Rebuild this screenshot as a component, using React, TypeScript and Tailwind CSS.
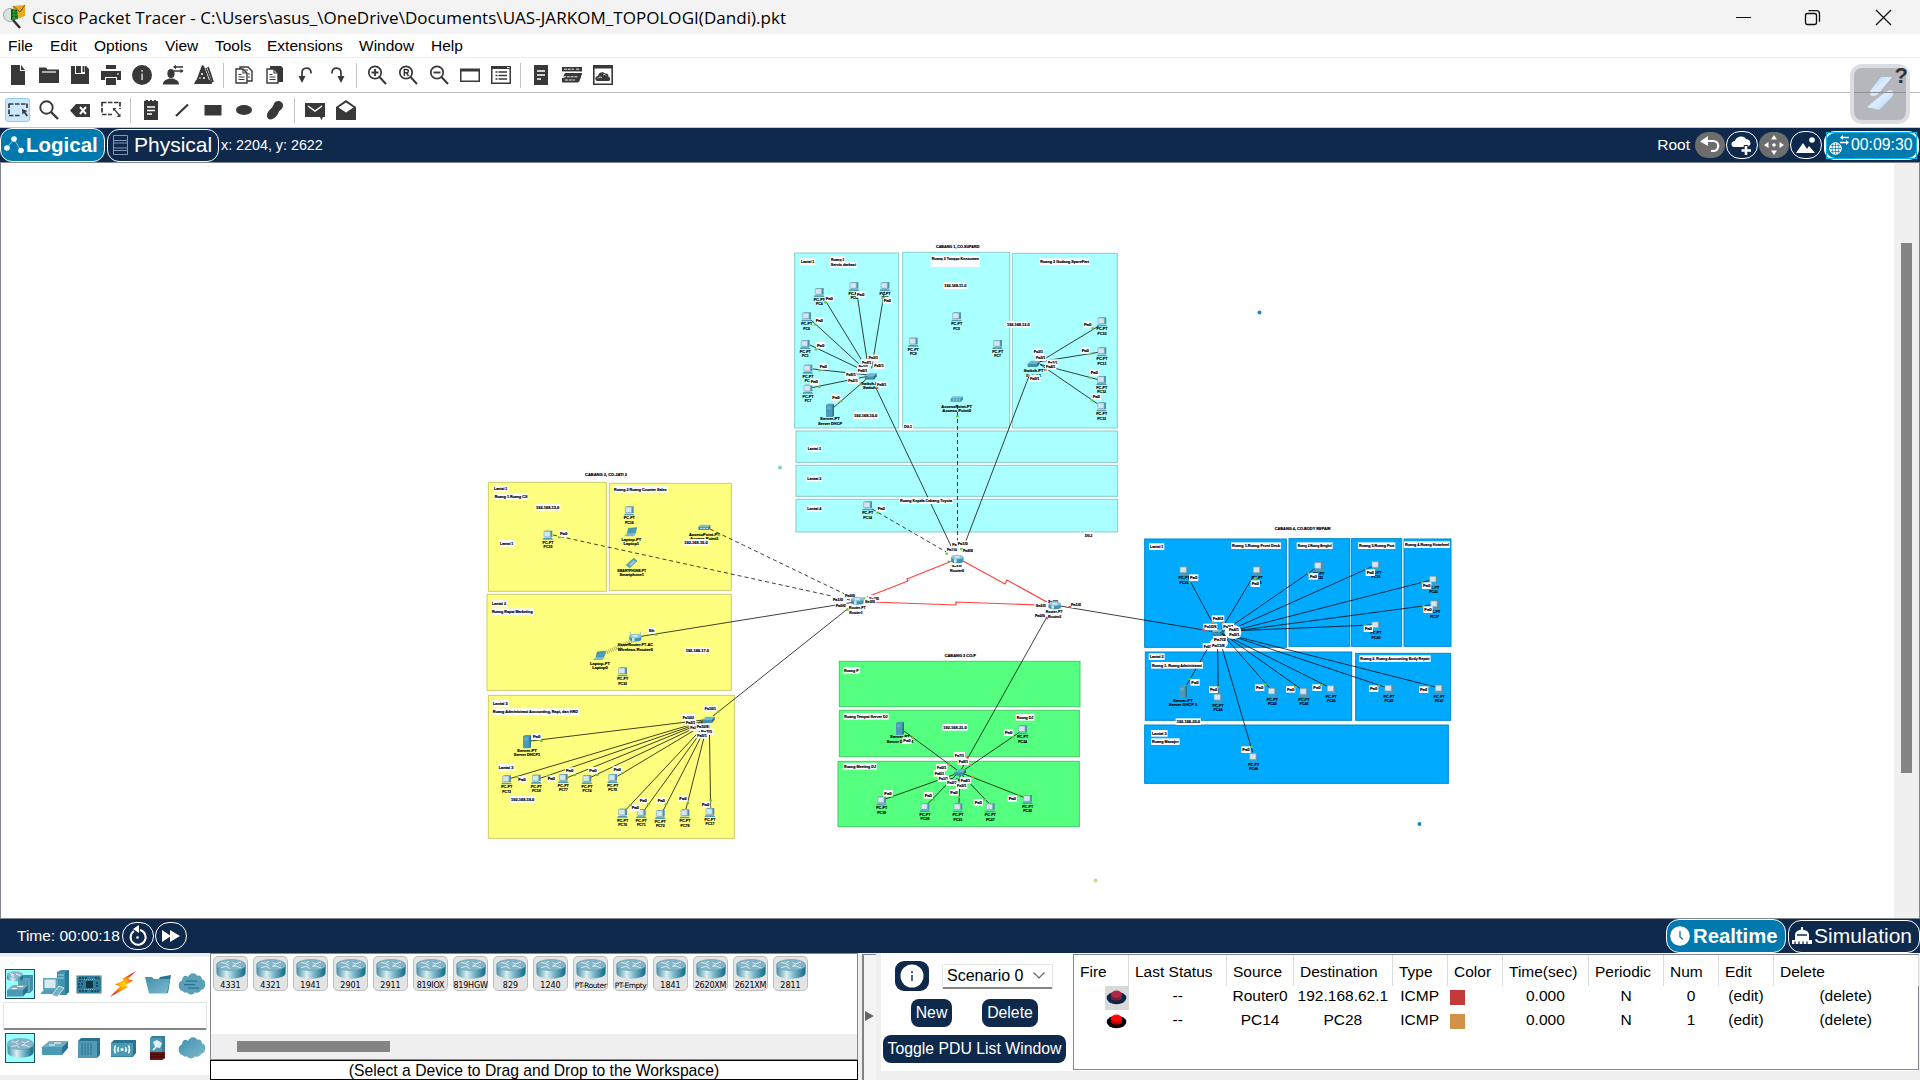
import React from "react";

const INK = "#38383a";

/* ---------- toolbar glyphs, drawn on a 20 x 20 grid ---------- */

const glyphs: Record<string, React.ReactNode> = {
  file: (
    <>
      <path d="M3 0h9v6h5v14H3z" />
      <path d="M13 0l4 5h-4z" />
    </>
  ),
  folder: (
    <>
      <path d="M0 2.500h7l1.500 2H20V18H0z" />
      <path d="M3 7h14" stroke="#fff" strokeWidth="1.200" />
    </>
  ),
  save: (
    <>
      <path d="M1 1h15l3 3v15H1z" />
      <path d="M5 1h10v8H5z" fill="#fff" />
      <path d="M6 1h5v7H6zM12.500 1h2v6h-2z" />
    </>
  ),
  print: (
    <>
      <path d="M5 0h10v4H5zM0 6h20v9h-4v-3H4v3H0z" />
      <path d="M5 13h10v7H5z" />
      <path d="M4 5h12M16 9h2" stroke="#fff" />
    </>
  ),
  info: (
    <>
      <circle cx="10" cy="10" r="10" />
      <path d="M9.200 5h1.800v1.800H9.200zM9.200 8.500h1.800v6.500H9.200z" fill="#bbb" />
    </>
  ),
  user: (
    <>
      <ellipse cx="8" cy="8.500" rx="3.600" ry="4.500" />
      <path d="M0 19.500c0-4 3-4.500 6-6h4c3 1.500 6 2 6 6z" />
      <path d="M11 2h9M11 6h9" stroke={INK} strokeWidth="1.400" />
      <path d="M10 2l3-2.200v4.400zM20.500 6l-3-2.200v4.400z" />
    </>
  ),
  wizard: (
    <>
      <path d="M8 0l2 1 5 14H2.500z" />
      <path d="M0 19l2-4h14l2 4z" />
      <path d="M12 3l6 15" stroke={INK} strokeWidth="1.600" />
      <path d="M13 2l6 16" stroke="#fff" strokeWidth="1" />
      <path d="M14 2l5 15" stroke={INK} strokeWidth="1.800" />
      <circle cx="8" cy="9" r="1" fill="#fff" />
      <circle cx="10" cy="13" r="1" fill="#fff" />
      <circle cx="6" cy="13" r="0.800" fill="#fff" />
    </>
  ),
  copy: (
    <g fill="#fff" stroke={INK} strokeWidth="1.400">
      <path d="M6 2h8l4 4v10H6z" />
      <path d="M2 4h7l4 4v10H2z" />
      <path d="M9 4v4h4M4.500 9.500h3M4.500 12h6M4.500 14.500h6M11 5h3M14 9h2M14 12h2" fill="none" strokeWidth="1.100" />
    </g>
  ),
  paste: (
    <>
      <path d="M5 1h11l2 2v14H5z" />
      <path d="M2 4h7l4 4v10H2z" fill="#fff" stroke={INK} strokeWidth="1.400" />
      <path d="M9 4v4h4M4.500 9.500h3M4.500 12h6M4.500 14.500h6" fill="none" stroke={INK} strokeWidth="1.100" />
    </>
  ),
  undo: (
    <>
      <path d="M6 12V8c0-6.500 9-6.500 9-.5v1" fill="none" stroke={INK} strokeWidth="1.700" />
      <path d="M2.500 11h7L6 18z" />
    </>
  ),
  redo: (
    <>
      <path d="M14 12V8c0-6.500-9-6.500-9-.5v1" fill="none" stroke={INK} strokeWidth="1.700" />
      <path d="M10.500 11h7L14 18z" />
    </>
  ),
  zoomin: (
    <>
      <circle cx="8" cy="7.500" r="6.200" fill="none" stroke={INK} strokeWidth="1.700" />
      <path d="M12.500 12l6.500 7" stroke={INK} strokeWidth="2" />
      <path d="M4.500 7.500h7M8 4v7" stroke={INK} strokeWidth="1.900" />
    </>
  ),
  zoomreset: (
    <>
      <circle cx="8" cy="7.500" r="6.200" fill="none" stroke={INK} strokeWidth="1.700" />
      <path d="M12.500 12l6.500 7" stroke={INK} strokeWidth="2" />
      <path d="M6.300 11V4.500h2.200c2.400 0 2.400 3.300 0 3.300H6.500M8.500 7.800l2 3.200" fill="none" stroke={INK} strokeWidth="1.500" />
    </>
  ),
  zoomout: (
    <>
      <circle cx="8" cy="7.500" r="6.200" fill="none" stroke={INK} strokeWidth="1.700" />
      <path d="M12.500 12l6.500 7" stroke={INK} strokeWidth="2" />
      <path d="M4.500 7.500h7" stroke={INK} strokeWidth="1.900" />
    </>
  ),
  window: (
    <>
      <path d="M0 3.500h20V17H0z" />
      <path d="M1.500 6.500h17v9h-17z" fill="#fff" />
    </>
  ),
  list: (
    <>
      <path d="M0 1h20v18H0z" />
      <path d="M1.500 4h17v13.500h-17z" fill="#fff" />
      <path d="M4.500 7h2M4.500 10.500h2M4.500 14h2M7.500 7H16M7.500 10.500H16M7.500 14H16" stroke={INK} strokeWidth="1.400" />
      <path d="M16 2.500h2.500" stroke="#fff" />
    </>
  ),
  doc: (
    <>
      <path d="M3 0h14v20H3z" />
      <path d="M6 6h8M6 10h8M6 14h4" stroke="#fff" strokeWidth="1.400" />
    </>
  ),
  devices: (
    <>
      <path d="M0 2h20v4.500H0zM3 8h17v2L17 12H1z" />
      <path d="M1 13l2-1h13l3-4v4l-2 5H1z" />
      <path d="M0 13h16v4.500H0z" />
      <path d="M2 4.200h10M14 4.200h4M0 7.300h18M3 15h10M1 11.800h15" stroke="#fff" strokeWidth="0.900" strokeDasharray="3 0.800" />
    </>
  ),
  cloudwin: (
    <>
      <path d="M0 0h20v20H0z" />
      <path d="M1.600 3.500h16.800v15H1.600z" fill="#fff" />
      <path d="M4.500 16c-3-.5-3-4.500.5-5 .5-4 5-5 7-2.500 3-.5 4 2 3.500 3.500 2.500.5 2 4 0 4z" />
      <path d="M5 13.500c1-2 3-2 4-.5M10 10c1-.8 2-.8 3 .5" fill="none" stroke="#fff" strokeWidth="0.800" />
    </>
  ),
  select: (
    <>
      <path d="M1 4h18M1 15.500h12M1 3.500v12M19 3.500v6" fill="none" stroke={INK} strokeWidth="1.700" strokeDasharray="4.500 1.500" />
      <path d="M14 9l5.500 2-2 1 2.500 3.500-1.500 1L16 13l-1.500 1.500z" />
    </>
  ),
  inspect: (
    <>
      <circle cx="7.500" cy="7.500" r="6.200" fill="none" stroke={INK} strokeWidth="1.900" />
      <path d="M12 12l7 7" stroke={INK} strokeWidth="2.400" />
    </>
  ),
  erase: (
    <>
      <path d="M0 10.500L6 4h14v13H6z" />
      <path d="M10 7l6 7M16 7l-6 7" stroke="#fff" strokeWidth="2" />
    </>
  ),
  resize: (
    <>
      <path d="M1 2.500h18M1 14.500h10M1 2v12M19 2v7" fill="none" stroke={INK} strokeWidth="1.700" strokeDasharray="4.500 1.500" />
      <path d="M13 9l5 6" stroke={INK} strokeWidth="1.200" />
      <path d="M12 8h3.500L12 11zM19.500 17h-4l4-3.500z" />
    </>
  ),
  note: (
    <>
      <path d="M3 1h1.500V0H7v1h2V0h2v1h2V0h2v1h2v19H3z" />
      <path d="M6 7h8M6 10.500h8M6 14h5" stroke="#fff" strokeWidth="1.300" />
    </>
  ),
  line: <path d="M4 16L16 4.500" stroke={INK} strokeWidth="2.200" />,
  rect: <path d="M1.500 5h17v10.500h-17z" />,
  ellipse: <ellipse cx="10" cy="10" rx="8" ry="5" />,
  free: <path d="M9 3.500c2-4 9-3 9 2 0 4-3.500 4-4.500 7S9 19.500 5.500 19.500C2 19.500 1 15 3 12c2-3 5-4.500 6-8.500z" />,
  mail: (
    <>
      <path d="M0 3h20v14h-2l-1.500 3-1.500-3H0z" />
      <path d="M3 6l7 5 7-5" fill="none" stroke="#fff" strokeWidth="1.500" />
    </>
  ),
  mailopen: (
    <>
      <path d="M0 7l10-7 10 7v13H0z" />
      <path d="M2.500 7.500L10 2.500l7.500 5-7.500 5z" fill="#fff" />
    </>
  ),
};

function Tool({ name, active }: { name: string; active?: boolean }) {
  return (
    <div className="flex h-full w-[31px] shrink-0 items-center justify-center">
      <div
        className={
          active
            ? "flex h-6 w-[25px] items-center justify-center rounded-[3px] border border-[#90c8f6] bg-[#cce8ff]"
            : "flex h-6 w-[25px] items-center justify-center"
        }
      >
        <svg width="20" height="20" viewBox="0 0 20 20" fill={INK} className="shrink-0 overflow-visible">
          {glyphs[name]}
        </svg>
      </div>
    </div>
  );
}

function ToolRow({ groups, active }: { groups: string[][]; active?: string }) {
  return (
    <div className="flex h-full items-center pl-[2px]">
      {groups.map((g, i) => (
        <React.Fragment key={i}>
          {i > 0 && (
            <div className="flex w-[9px] shrink-0 justify-center">
              <div className="h-[25px] w-px bg-[#c4c4c4]" />
            </div>
          )}
          {g.map((n) => (
            <Tool key={n} name={n} active={n === active} />
          ))}
        </React.Fragment>
      ))}
    </div>
  );
}

/* ---------- topology canvas ---------- */

type Device = [kind: string, x: number, y: number, a?: string, b?: string];
type Label = [x: number, y: number, text: string, w?: number];
type Link = [x1: number, y1: number, x2: number, y2: number];
type Zone = [x1: number, y1: number, x2: number, y2: number];

interface Site {
  ox: number;
  oy: number;
  fill: string;
  stroke: string;
  zones: Zone[];
  links: Link[];
  dots: [number, number, string?][];
  devices: Device[];
  labels: Label[];
}

const G = "#6cc644";
const O = "#f08030";
const R = "#f04848";

const sites: Site[] = [
  {
    ox: 780,
    oy: 235,
    fill: "#aaffff",
    stroke: "#88cccc",
    zones: [
      [44, 54, 356, 579],
      [368, 52, 689, 579],
      [697, 55, 1012, 579],
      [48, 588, 1013, 682],
      [48, 691, 1013, 784],
      [48, 793, 1013, 891],
    ],
    links: [
      [132, 190, 260, 400],
      [230, 170, 265, 400],
      [313, 170, 275, 400],
      [92, 254, 262, 410],
      [90, 330, 262, 412],
      [98, 402, 265, 420],
      [96, 458, 262, 424],
      [160, 518, 262, 430],
      [780, 380, 958, 272],
      [780, 380, 955, 352],
      [780, 388, 955, 434],
      [780, 388, 955, 508],
    ],
    dots: [
      [136, 202], [105, 269], [108, 344], [119, 406], [118, 456], [183, 499], [242, 448, O], [290, 458, O],
      [532, 544], [938, 280], [932, 356], [930, 428], [936, 496], [796, 405, O], [746, 422, O], [293, 833],
      [310, 188],
    ],
    devices: [
      ["pc", 118, 172, "PC-PT", "PC4"],
      ["pc", 222, 154, "PC-PT", "PC6"],
      ["pc", 315, 154, "PC-PT", "PC8"],
      ["pc", 80, 245, "PC-PT", "PC0"],
      ["pc", 76, 328, "PC-PT", "PC1"],
      ["pc", 84, 402, "PC-PT", "PC2"],
      ["pc", 84, 462, "PC-PT", "PC7"],
      ["server", 150, 526, "Server-PT", "Server DHCP"],
      ["switch", 272, 424, "Switch-PT", "Switch0"],
      ["pc", 530, 245, "PC-PT", "PC5"],
      ["pc", 400, 321, "PC-PT", "PC8"],
      ["pc", 653, 328, "PC-PT", "PC7"],
      ["ap", 530, 492, "AccessPoint-PT", "Access Point0"],
      ["switch", 761, 386, "Switch-PT", "Switch1"],
      ["pc", 966, 260, "PC-PT", "PC10"],
      ["pc", 966, 350, "PC-PT", "PC11"],
      ["pc", 965, 436, "PC-PT", "PC12"],
      ["pc", 965, 515, "PC-PT", "PC13"],
      ["pc", 263, 812, "PC-PT", "PC14"],
    ],
    labels: [
      [533, 34, "CABANG 1, CO.SUPARD", 130],
      [83, 80, "Lantai 1", 40],
      [173, 74, "Ruang 1", 40],
      [190, 89, "Servis darkasi", 76],
      [526, 71, "Ruang 2 Tunggu Konsumen", 142],
      [526, 86, " ", 142],
      [854, 80, "Ruang 3 Gudang SparePart", 146],
      [526, 152, "192.168.11.0", 66],
      [715, 268, "192.168.12.0", 68],
      [257, 542, "192.168.10.0", 70],
      [384, 576, "DG.1", 24],
      [926, 901, "DG.2", 22],
      [103, 641, "Lantai 2", 40],
      [103, 730, "Lantai 3", 42],
      [103, 820, "Lantai 4", 42],
      [438, 797, "Ruang Kepala Cabang Toyota", 156],
      [148, 190, "Fa0"], [242, 178, "Fa0"], [322, 196, "Fa0"], [118, 256, "Fa0"], [122, 331, "Fa0"],
      [130, 394, "Fa0"], [103, 441, "Fa0"], [168, 488, "Fa0"],
      [280, 369, "Fa3/1", 28], [260, 382, "Fa4/1", 28], [250, 396, "Fa1/1", 28], [297, 392, "Fa5/1", 28],
      [248, 406, "Fa6/1", 28], [213, 418, "Fa8/1", 28], [219, 436, "Fa2/1", 28], [305, 448, "Fa9/1", 28],
      [775, 351, "Fa3/1", 28], [782, 368, "Fa2/1", 28], [818, 383, "Fa1/1", 28], [812, 395, "Fa4/1", 28], [764, 430, "Fa0/1", 28],
      [923, 268, "Fa0"], [916, 346, "Fa0"], [943, 414, "Fa0"], [949, 485, "Fa0"], [304, 820, "Fa0"],
    ],
  },
  {
    ox: 480,
    oy: 465,
    fill: "#ffff7f",
    stroke: "#cccc66",
    zones: [
      [25, 52, 379, 379],
      [388, 55, 754, 376],
      [21, 388, 754, 676],
      [25, 691, 763, 1120],
    ],
    links: [
      [152, 828, 670, 765],
      [92, 940, 670, 768],
      [180, 940, 672, 770],
      [262, 938, 672, 772],
      [330, 938, 675, 774],
      [412, 934, 676, 776],
      [438, 1034, 678, 778],
      [494, 1034, 680, 778],
      [550, 1036, 682, 778],
      [618, 1032, 682, 778],
      [692, 1030, 688, 778],
    ],
    dots: [
      [238, 217], [717, 209], [528, 509], [715, 740], [184, 828], [112, 936], [205, 932], [284, 930], [352, 930],
      [428, 924], [452, 1020], [505, 1018], [558, 1018], [624, 1014], [692, 1006],
    ],
    devices: [
      ["pc", 204, 210, "PC-PT", "PC15"],
      ["pc", 448, 137, "PC-PT", "PC16"],
      ["laptop", 454, 202, "Laptop-PT", "Laptop1"],
      ["phone", 455, 294, "SMARTPHONE-PT", "Smartphone1"],
      ["ap", 673, 187, "AccessPoint-PT", "Access Point1"],
      ["wrouter", 466, 518, "HomeRouter-PT-AC", "Wireless Router0"],
      ["laptop", 360, 573, "Laptop-PT", "Laptop0"],
      ["pc", 428, 620, "PC-PT", "PC32"],
      ["server", 141, 830, "Server-PT", "Server DHCP1"],
      ["switch", 686, 764],
      ["pc", 80, 944, "PC-PT", "PC73"],
      ["pc", 169, 942, "PC-PT", "PC18"],
      ["pc", 250, 940, "PC-PT", "PC77"],
      ["pc", 321, 943, "PC-PT", "PC74"],
      ["pc", 398, 940, "PC-PT", "PC75"],
      ["pc", 428, 1044, "PC-PT", "PC70"],
      ["pc", 484, 1045, "PC-PT", "PC71"],
      ["pc", 541, 1048, "PC-PT", "PC72"],
      ["pc", 615, 1046, "PC-PT", "PC78"],
      ["pc", 690, 1042, "PC-PT", "PC17"],
    ],
    labels: [
      [378, 28, "CABANG 2, CO.JATI 2", 126],
      [62, 71, "Lantai 1", 40],
      [93, 95, "Ruang 1 Ruang CS", 98],
      [203, 127, "192.168.13.0", 70],
      [481, 73, "Ruang 2 Ruang Counter Sales", 158],
      [80, 235, "Lantai 1", 40],
      [648, 232, "192.168.15.0", 70],
      [57, 415, "Lantai 2", 42],
      [97, 440, "Ruang Rapat Marketing", 122],
      [652, 557, "192.168.17.0", 70],
      [61, 715, "Lantai 3", 44],
      [166, 740, "Ruang Administrasi Accounting, Rapi, dan HRD", 256],
      [78, 907, "Lantai 3", 44],
      [128, 1003, "192.168.18.0", 70],
      [251, 206, "Fa0"], [515, 497, "Eth", 16], [691, 730, "Fa10/1", 34], [170, 815, "Fa0"], [126, 943, "Fa0"],
      [214, 940, "Fa0"], [269, 917, "Fa0"], [339, 916, "Fa0"], [412, 914, "Fa0"], [466, 1028, "Fa0"], [490, 1006, "Fa0"],
      [544, 1006, "Fa0"], [609, 1000, "Fa0"], [677, 1018, "Fa0"],
      [680, 800, "Fa7/1", 34], [625, 757, "Fa10/2", 34], [632, 772, "Fa2/1", 28], [645, 788, "Fa3/1", 28], [668, 785, "Fa10/8", 36], [666, 811, "Fa5/1", 28],
    ],
  },
  {
    ox: 730,
    oy: 535,
    fill: "#55ff7f",
    stroke: "#44cc66",
    zones: [
      [328, 379, 1050, 515],
      [328, 526, 1048, 665],
      [324, 679, 1048, 875],
    ],
    links: [
      [522, 588, 685, 708],
      [868, 592, 692, 712],
      [466, 792, 680, 716],
      [596, 804, 680, 718],
      [687, 804, 690, 718],
      [776, 804, 694, 718],
      [884, 788, 700, 716],
    ],
    dots: [
      [656, 688, O], [722, 690, O], [728, 726, O], [548, 608, O], [850, 606], [488, 786], [611, 794], [687, 786],
      [764, 794], [865, 780], [713, 667, R],
    ],
    devices: [
      ["server", 510, 580, "Server-PT", "Server DHCP2"],
      ["pc", 878, 584, "PC-PT", "PC24"],
      ["switch", 690, 712, "Switch-PT", "Switch7"],
      ["pc", 455, 797, "PC-PT", "PC19"],
      ["pc", 585, 817, "PC-PT", "PC28"],
      ["pc", 684, 818, "PC-PT", "PC21"],
      ["pc", 781, 818, "PC-PT", "PC27"],
      ["pc", 893, 793, "PC-PT", "PC22"],
    ],
    labels: [
      [691, 361, "CABANG 3 CO.P", 94],
      [364, 406, "Ruang P", 44],
      [408, 544, "Ruang Tempat Server DJ", 130],
      [675, 577, "192.168.21.0", 70],
      [885, 547, "Ruang DJ", 50],
      [390, 694, "Ruang Meeting DJ", 96],
      [531, 617, "Fa0"], [836, 593, "Fa0"], [474, 775, "Fa0"], [595, 781, "Fa0"], [672, 772, "Fa0"], [745, 802, "Fa0"], [847, 790, "Fa0"],
      [688, 661, "Fa7/1", 28], [700, 680, "Fa8/1", 28], [635, 697, "Fa0/1", 28], [628, 715, "Fa6/1", 28], [640, 731, "Fa1/1", 28],
      [666, 743, "Fa2/1", 28], [706, 736, "Fa4/1", 28], [695, 752, "Fa3/1", 28],
    ],
  },
  {
    ox: 1130,
    oy: 515,
    fill: "#00aaff",
    stroke: "#0088cc",
    zones: [
      [44, 72, 469, 397],
      [477, 71, 659, 394],
      [664, 71, 815, 394],
      [822, 72, 963, 394],
      [46, 411, 665, 616],
      [677, 415, 962, 616],
      [44, 630, 955, 805],
    ],
    links: [
      [176, 190, 262, 350],
      [370, 184, 270, 350],
      [556, 160, 280, 350],
      [728, 154, 290, 350],
      [900, 196, 300, 350],
      [902, 270, 300, 350],
      [724, 330, 300, 348],
      [170, 510, 262, 350],
      [265, 536, 262, 350],
      [418, 518, 262, 340],
      [510, 520, 270, 350],
      [592, 514, 280, 358],
      [764, 516, 290, 358],
      [916, 516, 300, 360],
      [368, 712, 268, 370],
    ],
    dots: [
      [180, 200], [376, 190], [536, 175], [709, 163], [877, 203], [880, 273], [704, 331], [180, 492], [265, 516],
      [406, 508], [496, 516], [574, 510], [745, 512], [896, 514], [364, 696], [220, 344, R], [248, 322, O], [279, 322, O],
    ],
    devices: [
      ["pc", 162, 167, "PC-PT", "PC29"],
      ["pc", 382, 167, "PC-PT", "PC31"],
      ["pc", 566, 154, "PC-PT", "PC33"],
      ["pc", 738, 151, "PC-PT", "PC35"],
      ["pc", 911, 195, "PC-PT", "PC41"],
      ["pc", 914, 269, "PC-PT", "PC37"],
      ["pc", 738, 332, "PC-PT", "PC40"],
      ["switch", 262, 352],
      ["server", 159, 530, "Server-PT", "Server DHCP 3"],
      ["pc", 264, 549, "PC-PT", "PC44"],
      ["pc", 427, 531, "PC-PT", "PC43"],
      ["pc", 522, 532, "PC-PT", "PC46"],
      ["pc", 604, 523, "PC-PT", "PC45"],
      ["pc", 777, 522, "PC-PT", "PC42"],
      ["pc", 928, 522, "PC-PT", "PC47"],
      ["pc", 371, 727, "PC-PT", "PC48"],
    ],
    labels: [
      [518, 40, "CABANG 4, CO.BODY REPAIR", 168],
      [80, 95, "Lantai 1", 40],
      [378, 92, "Ruang 1.Ruang Front Desk", 144],
      [554, 92, "Ruang 2.Ruang Bengkel", 102],
      [740, 92, "Ruang 3.Ruang Part", 106],
      [891, 89, "Ruang 4.Ruang Hotwheel", 132],
      [80, 425, "Lantai 2", 42],
      [141, 451, "Ruang 1. Ruang Administrasi", 150],
      [795, 431, "Ruang 2. Ruang Accounting Body Repair", 208],
      [175, 620, "192.168.20.0", 70],
      [88, 655, "Lantai 3", 44],
      [106, 680, "Ruang Manajer", 80],
      [191, 188, "Fa0"], [376, 206, "Fa0"], [550, 184, "Fa0"], [721, 173, "Fa0"], [890, 212, "Fa0"], [894, 284, "Fa0"], [715, 341, "Fa0"],
      [195, 502, "Fa0"], [251, 524, "Fa0"], [389, 518, "Fa0"], [482, 523, "Fa0"], [561, 518, "Fa0"], [731, 521, "Fa0"], [881, 524, "Fa0"], [348, 704, "Fa0"],
      [264, 311, "Fa9/2", 32], [295, 334, "Fa8/1", 30], [241, 336, "Fa10/8", 36], [312, 345, "Fa4/1", 30], [313, 358, "Fa5/1", 30],
      [234, 394, "Fa0/1", 26], [270, 373, "Fa7/2", 36], [265, 392, "Fa11/8", 38],
    ],
  },
];

function DeviceIcon({ kind }: { kind: string }) {
  switch (kind) {
    case "pc":
      return (
        <>
          <path d="M-9 -13h22v20h-22z" fill="#4f8fa8" />
          <path d="M-12 -11h19v17h-19z" fill="#d4e6ee" stroke="#7fa9ba" strokeWidth="2" />
          <path d="M-14 9h26l4 5h-32z" fill="#4f9cb8" />
        </>
      );
    case "server":
      return (
        <>
          <path d="M-12 -16l6-4h18v36l-5 4h-19z" fill="#4a9cba" />
          <path d="M7 -14l5-5v35l-5 4z" fill="#2a7390" />
          <path d="M-9 -10h12M-9 -5h12" stroke="#8fc4d4" strokeWidth="1.500" />
        </>
      );
    case "switch":
      return (
        <>
          <path d="M-18 0l10-9h26l-8 9z" fill="#6fb6cc" />
          <path d="M-18 0h28v10h-28z" fill="#3f8eac" />
          <path d="M10 0l8-9v9l-8 10z" fill="#1f6986" />
        </>
      );
    case "ap":
      return (
        <>
          <path d="M-18 -2l6-6h30l-4 6z" fill="#7fc0d4" />
          <path d="M-18 -2h32v10h-32z" fill="#3f8eac" />
          <path d="M14 -2l4-6v9l-4 7z" fill="#1f6986" />
          <path d="M-12 3h6M-3 3h6M6 3h5" stroke="#dff" strokeWidth="3" />
        </>
      );
    case "laptop":
      return (
        <>
          <path d="M-8 -12l24-2-4 16-24 2z" fill="#4a9cba" stroke="#2f7f9c" strokeWidth="2" />
          <path d="M-20 9l10-6h24l-6 9h-28z" fill="#7fb8cc" />
        </>
      );
    case "phone":
      return (
        <>
          <path d="M-16 6l22-20 10 8-22 20z" fill="#5aa8c4" stroke="#2f7f9c" strokeWidth="2" />
          <path d="M-8 5l14-13 5 4-14 13z" fill="#9fcbdc" />
        </>
      );
    default:
      return (
        <>
          {kind === "wrouter" && <path d="M-15 0v-18M15 0v-18" stroke="#7fb4c4" strokeWidth="2.500" />}
          <path d="M-18 -5v10c0 9 36 9 36 0v-10z" fill="#3f93b0" />
          <path d="M-10 -2v12h8v-12z" fill="#c8e6ee" />
          <ellipse cx="0" cy="-5" rx="18" ry="7" fill="#8fc4d4" />
          <path d="M-9 -7l16 4M-7 -2l14-6" stroke="#fff" strokeWidth="2" />
        </>
      );
  }
}

function TinyText({ x, y, text, w }: { x: number; y: number; text: string; w?: number }) {
  return (
    <text
      x={x}
      y={y + 4.500}
      textAnchor="middle"
      textLength={w}
      lengthAdjust="spacingAndGlyphs"
      stroke="#000"
      strokeWidth="0.500"
      className="fill-black font-['Liberation_Sans'] text-[11.500px] font-bold"
    >
      {text}
    </text>
  );
}

function SiteView({ site }: { site: Site }) {
  return (
    <g transform={`translate(${site.ox} ${site.oy}) scale(0.33333)`}>
      {site.zones.map(([x1, y1, x2, y2], i) => (
        <rect key={i} x={x1} y={y1} width={x2 - x1} height={y2 - y1} fill={site.fill} stroke={site.stroke} strokeWidth="3" />
      ))}
      {site.links.map(([x1, y1, x2, y2], i) => (
        <line key={i} x1={x1} y1={y1} x2={x2} y2={y2} stroke="#000" strokeOpacity="0.750" strokeWidth="3" />
      ))}
    </g>
  );
}

function SiteTop({ site }: { site: Site }) {
  return (
    <g transform={`translate(${site.ox} ${site.oy}) scale(0.33333)`}>
      {site.devices.map(([kind, x, y, a, b], i) => {
        const drop = kind === "server" ? 26 : 22;
        return (
          <g key={i}>
            <g transform={`translate(${x} ${y})`}>
              <DeviceIcon kind={kind} />
            </g>
            {a && <TinyText x={x} y={y + drop} text={a} w={a.length * 6.6} />}
            {b && <TinyText x={x} y={y + drop + 13} text={b} w={b.length * 6.6} />}
          </g>
        );
      })}
      {site.labels.map(([x, y, text, w = 22], i) => (
        <g key={i}>
          <rect x={x - w / 2 - 3} y={y - 10} width={w + 6} height="20" fill="#fafaff" />
          <TinyText x={x} y={y} text={text} w={w} />
        </g>
      ))}
      {site.dots.map(([x, y, c], i) => (
        <rect key={i} x={x - 4} y={y - 3} width="8" height="6" fill={c ?? G} />
      ))}
    </g>
  );
}

const core: Site = {
  ox: 730,
  oy: 535,
  fill: "none",
  stroke: "none",
  zones: [],
  links: [],
  dots: [
    [650, 56], [694, 42], [402, 190], [352, 224], [1020, 216, R], [950, 250, R], [656, 80],
  ],
  devices: [
    ["router", 682, 74],
    ["router", 382, 200],
    ["router", 974, 214],
  ],
  labels: [
    [680, 94, "Se2/0", 30], [681, 106, "Router0", 42], [666, 44, "Fa7/0", 30], [682, 30, "Fa6/0", 30], [698, 26, "Fa1/0", 30], [714, 46, "Fa8/0", 30],
    [360, 182, "Fa0/0", 30], [324, 193, "Fa1/0", 30], [332, 211, "Fa0/0", 30], [432, 190, "Se2/0", 30], [420, 201, "Se3/0", 30], [382, 218, "Router-PT", 50], [378, 232, "Router1", 40],
    [969, 200, "Se3/0", 30], [932, 211, "Se2/0", 30], [1038, 209, "Fa1/0", 30], [930, 242, "Fa0/0", 30], [972, 230, "Router-PT", 50], [974, 244, "Router2", 40],
  ],
};

function CoreIcons() {
  return (
    <g transform="translate(730 535) scale(0.33333)">
      {core.devices.map(([kind, x, y], i) => (
        <g key={i} transform={`translate(${x} ${y - 3})`}>
          <DeviceIcon kind={kind} />
        </g>
      ))}
    </g>
  );
}

function Topology() {
  return (
    <svg width="1893" height="755" viewBox="1 163 1893 755" className="block" aria-label="Network topology">
      {sites.map((s) => (
        <SiteView key={s.ox + s.oy} site={s} />
      ))}
      <g fill="none" stroke="#000" strokeOpacity="0.750" strokeWidth="1">
        <path d="M876 388L951 546" />
        <path d="M1029 376L964 546" />
        <path d="M957.500 405V549" strokeDasharray="4 3" />
        <path d="M872 509L948 553" strokeDasharray="4 3" />
        <path d="M553 535L850 600" strokeDasharray="4 3" />
        <path d="M710 529L855 599" strokeDasharray="4 3" />
        <path d="M637 637L855 602" />
        <path d="M713 716L850 607" />
        <path d="M1048 615L960 772" />
        <path d="M1060 606L1216 632" />
        <path d="M605 653L634 640" strokeDasharray="1 1" strokeWidth="4" strokeOpacity="0.300" />
      </g>
      <g fill="none" stroke="#ff4040" strokeWidth="1.200">
        <path d="M867 597L908 581l-1-2 45-18" />
        <path d="M963 561l42 23 2-4 47 26" />
        <path d="M872 602l84 3v-3l82 3" />
      </g>
      <ellipse cx="1233" cy="632" rx="8.500" ry="7" fill="#fff" />
      <ellipse cx="1219" cy="643" rx="9" ry="6" fill="#fff" />
      {sites.map((s) => (
        <SiteTop key={s.ox + s.oy} site={s} />
      ))}
      <SiteTop site={core} />
      <CoreIcons />
      <circle cx="1259.500" cy="312.500" r="2" fill="#1e88c8" />
      <circle cx="780" cy="467.500" r="2" fill="#7fd8c0" />
      <circle cx="1419.500" cy="824" r="2" fill="#1e88c8" />
      <circle cx="1095.500" cy="880.500" r="2" fill="#d8d880" />
    </svg>
  );
}

/* ---------- device palette drawings ---------- */

function Gradients() {
  return (
    <svg width="0" height="0" className="absolute">
      <defs>
        <linearGradient id="metal" x1="0" x2="1" y1="0" y2="0">
          <stop offset="0" stopColor="#3f8fa8" />
          <stop offset="0.350" stopColor="#dceef2" />
          <stop offset="0.600" stopColor="#7fb8c8" />
          <stop offset="1" stopColor="#0a6a88" />
        </linearGradient>
        <linearGradient id="teal" x1="0" x2="1" y1="0" y2="1">
          <stop offset="0" stopColor="#3f8fab" />
          <stop offset="1" stopColor="#7fbace" />
        </linearGradient>
        <linearGradient id="badge" x1="0" x2="1" y1="0" y2="1">
          <stop offset="0" stopColor="#b4d6fa" />
          <stop offset="0.500" stopColor="#dcecff" />
          <stop offset="1" stopColor="#a8cff8" />
        </linearGradient>
        <radialGradient id="bolt">
          <stop offset="0" stopColor="#ffe000" />
          <stop offset="0.500" stopColor="#ff8a10" />
          <stop offset="1" stopColor="#f02818" />
        </radialGradient>
      </defs>
    </svg>
  );
}

function RouterArt({ w, h }: { w: number; h: number }) {
  return (
    <svg width={w} height={h} viewBox="0 0 30 20" preserveAspectRatio="none" className="shrink-0">
      <path d="M0.500 6v8c0 7.500 29 7.500 29 0V6z" fill="url(#metal)" />
      <ellipse cx="15" cy="6" rx="14.500" ry="5.600" fill="#86b4c6" stroke="#5ea0b6" strokeWidth="0.600" />
      <path
        d="M5 3.500l4.500.8 3.500-2M14 9.500l-3.500-2L5 8.500M16.500 3.500l3 1.500 5.500-2M16 7l4 .2 5 1.600M10 5l3 1.500M20 5.500l-3 2"
        fill="none"
        stroke="#e4f3f7"
        strokeWidth="0.900"
      />
    </svg>
  );
}

const cloudPath = "M5 18c-5 0-6-8-1-9 0-4 4-5 6-3 2-4 8-4 9-1 3-1 5 1 5 3 5 1 4 9-1 9-1 3-5 3-6 2-2 3-7 2-8 0-2 1-4 0-4-1z";

const palette: Record<string, React.ReactNode> = {
  network: (
    <svg width="28" height="28" viewBox="0 0 28 28">
      <path d="M12 8l3-3h12v15l-3 3H12z" fill="#3f8fab" />
      <path d="M12 8h12v14H12z" fill="#5ea5bc" />
      <path d="M15 10v10M18 10v10M21 10v10" stroke="#3f8fab" />
      <path d="M1 4.500v4c0 4 16 4 16 0v-4z" fill="url(#metal)" />
      <ellipse cx="9" cy="4.500" rx="8" ry="3.200" fill="#86b8ca" />
      <path d="M4 3.500l4 1.500M10 4l4 1.500M5 5.500l3 1" stroke="#fff" strokeWidth="0.900" />
      <path d="M1 20l6-5h15l-5 5z" fill="#6fb0c4" />
      <path d="M1 20h16v6.500H1z" fill="#4a9ab4" />
      <path d="M17 20l5-5v6l-5 5.500z" fill="#2a7390" />
      <path d="M6 18.500h5M11 16.500h6" stroke="#fff" />
    </svg>
  ),
  end: (
    <svg width="28" height="28" viewBox="0 0 28 28">
      <path d="M16 2l4-2h8v22l-3 3h-9z" fill="#4292ae" />
      <path d="M24 2l4-2v22l-4 3z" fill="#2a7a98" />
      <path d="M17 5h6M17 8h6" stroke="#a9d0de" />
      <path d="M2 8h15v12H2z" fill="#5ea5bc" />
      <path d="M3.500 9.500h11v8.500h-11z" fill="#d8ebf2" />
      <path d="M0 23l3-3h14l-3 4H0z" fill="#4f9cb4" />
      <path d="M11 25l7-9 5 2-7 9z" fill="#6fb0c4" stroke="#fff" strokeWidth="0.700" />
    </svg>
  ),
  board: (
    <svg width="28" height="28" viewBox="0 0 28 28">
      <path d="M1.500 5.500h25v18h-25z" fill="#2f7f9a" />
      <path d="M4 8h8M4 11h4M20 8h5M4 21h8M16 21h8M22 12v6M3 14h5M3 17h4" stroke="#1c3f4c" strokeWidth="1.600" strokeDasharray="2 1" />
      <path d="M11 11h7v7h-7z" fill="#16333f" />
      <path d="M9 9.500h11M9 19.500h11" stroke="#8fc0ce" strokeWidth="0.800" strokeDasharray="1 1" />
      <path d="M2 7h2M2 22h2M24 7h2M24 22h2" stroke="#c8884a" strokeWidth="1.200" />
    </svg>
  ),
  bolt: (
    <svg width="28" height="28" viewBox="0 0 28 28">
      <path d="M27 1L13 9l2 1-9 4.500 5 2-10 10.500 18-10-3-1.500 8-5-5-1.500z" fill="url(#bolt)" />
    </svg>
  ),
  folder: (
    <svg width="28" height="28" viewBox="0 0 28 28">
      <path d="M16 7l11-2-3 18H6z" fill="#2a7390" />
      <path d="M1 7h7l2 2 16 0-3 14.500H5z" fill="url(#teal)" />
    </svg>
  ),
  cloudlines: (
    <svg width="28" height="28" viewBox="0 0 28 24" preserveAspectRatio="none">
      <path d={cloudPath} fill="#5aa0b8" />
      <path d="M8 9.500h11M6 12.500h11M10 15.500h11" stroke="#2a7390" strokeWidth="1.200" />
    </svg>
  ),
  router: <RouterArt w={27} h={20} />,
  switch: (
    <svg width="28" height="28" viewBox="0 0 28 28">
      <path d="M1 13l7-6h19l-6 6z" fill="#6fb0c4" />
      <path d="M1 13h20v8H1z" fill="#4a9ab4" />
      <path d="M21 13l6-6v7l-6 7z" fill="#2a7390" />
      <path d="M8 11h6M13 9h7" stroke="#fff" />
    </svg>
  ),
  hub: (
    <svg width="28" height="28" viewBox="0 0 28 28">
      <path d="M3 7l3-3h19v17l-3 3H3z" fill="#2a7390" />
      <path d="M3 7h19v17H3z" fill="#5299b4" />
      <path d="M7 9v12M10 9v12M13 9v12M16 9v12" stroke="#2a7390" />
    </svg>
  ),
  wireless: (
    <svg width="28" height="28" viewBox="0 0 28 28">
      <path d="M2 9l3-3h22v13l-3 4H2z" fill="#2a7390" />
      <path d="M2 9h22v13.500H2z" fill="#4a9ab4" />
      <circle cx="13" cy="15.500" r="1.600" fill="#fff" />
      <path d="M9.500 13q-1.500 2.500 0 5M16.500 13q1.500 2.500 0 5M6.500 11.500q-2 4 0 8M19.500 11.500q2 4 0 8" fill="none" stroke="#fff" strokeWidth="1.400" />
    </svg>
  ),
  security: (
    <svg width="28" height="28" viewBox="0 0 28 28">
      <path d="M6 4l2-2h13v22l-3 2H6z" fill="#3a7f98" />
      <path d="M6 4h12v14H6z" fill="#4a9ab4" />
      <path d="M6 18h15v6l-3 2H6z" fill="#6a1414" />
      <path d="M9 8l4-2 5 3-2 5-5-1z" fill="#fff" opacity="0.850" />
      <path d="M12 13l-3 3" stroke="#fff" strokeWidth="1.500" />
      <path d="M6 20.500h14M6 23h14" stroke="#3a0808" />
    </svg>
  ),
  cloud: (
    <svg width="28" height="28" viewBox="0 0 28 24" preserveAspectRatio="none">
      <path d={cloudPath} fill="url(#teal)" />
    </svg>
  ),
};

function PaletteRow({ items }: { items: string[] }) {
  return (
    <div className="flex pl-[5px]">
      {items.map((n, i) => (
        <div
          key={n}
          className={
            i === 0
              ? "mr-[2.500px] flex size-[30px] items-center justify-center border border-[#20525c] bg-[#9ff]"
              : "flex h-[30px] w-[34.300px] items-center justify-center"
          }
        >
          {palette[n]}
        </div>
      ))}
    </div>
  );
}

const models = ["4331", "4321", "1941", "2901", "2911", "819IOX", "819HGW", "829", "1240", "PT-Router", "PT-Empty", "1841", "2620XM", "2621XM", "2811"];

const menu: [string, string][] = [
  ["File", "w-[42px]"],
  ["Edit", "w-[44px]"],
  ["Options", "w-[71px]"],
  ["View", "w-[50px]"],
  ["Tools", "w-[52px]"],
  ["Extensions", "w-[92px]"],
  ["Window", "w-[72px]"],
  ["Help", "w-[50px]"],
];

/* ---------- PDU table ---------- */

const columns: [string, string][] = [
  ["Fire", "w-[55px]"],
  ["Last Status", "w-[98px]"],
  ["Source", "w-[67px]"],
  ["Destination", "w-[99px]"],
  ["Type", "w-[55px]"],
  ["Color", "w-[55px]"],
  ["Time(sec)", "w-[86px]"],
  ["Periodic", "w-[75px]"],
  ["Num", "w-[55px]"],
  ["Edit", "w-[55px]"],
  ["Delete", "w-[145px]"],
];

function FireButton({ dim }: { dim?: boolean }) {
  return (
    <svg width="22" height="16" viewBox="0 0 22 16">
      <ellipse cx="10.500" cy="9" rx="9.800" ry="6.200" fill={dim ? "#06264a" : "#000"} />
      <path d="M5 5v4c0 3.500 11 3.500 11 0V5z" fill={dim ? "#7c2038" : "#c00000"} />
      <ellipse cx="10.500" cy="5.200" rx="5.300" ry="3.600" fill={dim ? "#b02848" : "#ff0808"} />
    </svg>
  );
}

const rows = [
  { src: "Router0", dst: "192.168.62.1", sw: "bg-[#c13c38]", num: "0", dim: true },
  { src: "PC14", dst: "PC28", sw: "bg-[#d19248]", num: "1", dim: false },
];

function PduTable() {
  return (
    <div className="h-[116px] w-[846px] shrink-0 border border-[#828790] bg-white text-[15.500px] leading-6">
      <div className="flex h-[31px]">
        {columns.map(([c, w]) => (
          <div key={c} className={`${w} flex shrink-0 items-center border-r border-[#dcdcdc] pt-[2px] pl-[6px] whitespace-nowrap`}>
            {c}
          </div>
        ))}
      </div>
      {rows.map((r) => (
        <div key={r.num} className="flex h-6 text-center">
          <div className="flex w-[55px] justify-end">
            <div className={r.dim ? "flex size-6 items-end justify-center bg-[#d9d9d9] pb-[5px]" : "flex size-6 items-end justify-center pb-[5px]"}>
              <FireButton dim={r.dim} />
            </div>
          </div>
          <div className="-mt-[2px] w-[98px]">--</div>
          <div className="-mt-[2px] w-[67px]">{r.src}</div>
          <div className="-mt-[2px] w-[99px] whitespace-nowrap">{r.dst}</div>
          <div className="-mt-[2px] w-[55px]">ICMP</div>
          <div className="w-[55px] pt-1 pl-[3px]">
            <div className={`size-[15px] ${r.sw}`} />
          </div>
          <div className="-mt-[2px] w-[87px]">0.000</div>
          <div className="-mt-[2px] w-[75px]">N</div>
          <div className="-mt-[2px] w-[55px]">{r.num}</div>
          <div className="-mt-[2px] w-[55px]">(edit)</div>
          <div className="-mt-[2px] w-[145px]">(delete)</div>
        </div>
      ))}
    </div>
  );
}

/* ---------- page ---------- */

export default function App() {
  return (
    <div className="flex h-[1080px] w-[1920px] flex-col overflow-hidden bg-[#efefef] font-['Liberation_Sans',sans-serif] text-black">
      <Gradients />

      {/* title bar */}
      <div className="flex h-[34px] shrink-0 items-center bg-[#f3f3f3]">
        <svg width="24" height="24" viewBox="0 0 24 24" className="ml-[3px]">
          <circle cx="7" cy="10" r="6.500" fill="#d8e4dc" stroke="#9aa" />
          <path d="M10 1l12-1v11l-11 4z" fill="#e8a820" />
          <path d="M10 1l7 6 5-7" fill="none" stroke="#7a5010" />
          <path d="M8 4l6 1 1 9-7 1z" fill="#0a5a14" />
          <path d="M9 7h5M9 10h6M9 13h6M11 5v9" stroke="#30c040" strokeWidth="0.800" />
          <path d="M10 15l7 8" stroke="#333" strokeWidth="2.500" />
        </svg>
        <span className="mt-px ml-[5px] w-[1600px] font-['Open_Sans'] text-[17px] tracking-[0.045px] whitespace-nowrap">
          Cisco Packet Tracer - C:\Users\asus_\OneDrive\Documents\UAS-JARKOM_TOPOLOGI(Dandi).pkt
        </span>
        <svg width="180" height="24" viewBox="1725 4 180 24" fill="none" stroke="#111" className="ml-[93px] shrink-0">
          <path d="M1736 16.500h15" />
          <rect x="1805.500" y="12.500" width="11" height="11" rx="2" strokeWidth="1.300" />
          <path d="M1808.500 9.700h8q3 0 3 3v8" strokeWidth="1.300" />
          <path d="M1876 9l15 15M1891 9l-15 15" strokeWidth="1.300" />
        </svg>
      </div>

      {/* menu */}
      <div className="flex h-6 shrink-0 items-center border-b border-[#ececec] bg-white pl-2 text-[15.500px]">
        {menu.map(([m, w]) => (
          <span key={m} className={`${w} mt-px shrink-0`}>
            {m}
          </span>
        ))}
      </div>

      {/* tool bars */}
      <div className="relative flex h-[70px] shrink-0 flex-col bg-white">
        <div className="h-[35px] border-b border-[#bdbdbd]">
          <ToolRow
            groups={[
              ["file", "folder", "save", "print", "info", "user", "wizard"],
              ["copy", "paste", "undo", "redo"],
              ["zoomin", "zoomreset", "zoomout", "window", "list"],
              ["doc", "devices", "cloudwin"],
            ]}
          />
        </div>
        <div className="h-[35px] border-b border-[#c8c8c8]">
          <ToolRow
            active="select"
            groups={[
              ["select", "inspect", "erase", "resize"],
              ["note", "line", "rect", "ellipse", "free"],
              ["mail", "mailopen"],
            ]}
          />
        </div>
        <div className="absolute top-[6px] right-[10px] flex size-[60px] items-center justify-center rounded-[12px] border-4 border-[#dcdde2] bg-[#b6b7bd]">
          <svg width="52" height="52" viewBox="0 0 52 52" className="shrink-0">
            <path d="M27 9h11L25 25c-2 4-10 4-9 0 0-2 1-4 3-6z" fill="url(#badge)" />
            <path d="M36 22c4 1 4 4 2 7L25 42l-12-3 17-14z" fill="url(#badge)" />
            <path d="M0 24.500h52" stroke="#8d8f96" />
          </svg>
          <span className="absolute -top-[3px] -right-[2px] text-[22px] leading-none font-bold text-[#2f3236]">?</span>
        </div>
      </div>

      {/* logical / physical bar */}
      <div className="flex h-[34px] shrink-0 items-center justify-between bg-[#0f294d] text-white">
        <div className="flex h-full items-center">
          <div className="flex h-[34px] w-[105px] items-center rounded-[12px] border-[1.500px] border-white bg-[#007aae] pl-[3px]">
            <svg width="20" height="18" viewBox="0 0 20 18" fill="#fff">
              <path d="M3 12l7-9 7 12" fill="none" stroke="#fff" strokeWidth="0.500" />
              <circle cx="3" cy="12" r="2.800" />
              <circle cx="10" cy="3" r="2.800" />
              <circle cx="17" cy="14.500" r="2.800" />
            </svg>
            <span className="mt-px ml-[2px] text-[20.500px] font-bold">Logical</span>
          </div>
          <div className="ml-[2px] flex h-[33px] w-[112px] items-center rounded-[12px] border-[1.500px] border-white pl-[5px]">
            <svg width="15" height="20" viewBox="0 0 15 20" fill="none" stroke="#8fa3c0" strokeWidth="0.900">
              <path d="M0.500 0.500h14v19H0.500zM1 5.500h13M1 8h13M1 13h13M1 15.500h13" />
            </svg>
            <span className="ml-[6px] text-[21px]">Physical</span>
          </div>
          <span className="mt-px ml-[2px] text-[14.300px]">x: 2204, y: 2622</span>
        </div>
        <div className="flex h-full items-center">
          <span className="mr-[5px] text-[15.500px]">Root</span>
          <div className="flex h-[26px] w-[30px] items-center justify-center rounded-full bg-[#6d6d6d]">
            <svg width="20" height="18" viewBox="0 0 20 18" fill="none">
              <path d="M6 5h7c7 0 7 10 0 10h-2" stroke="#fff" strokeWidth="2.200" />
              <path d="M0 5.500L8 0v10z" fill="#fff" />
            </svg>
          </div>
          <div className="ml-px flex h-[28px] w-8 items-center justify-center rounded-full border border-white">
            <svg width="22" height="20" viewBox="0 0 22 20" fill="#fff">
              <path d="M3 12c-4-1-3-6 1-6 1-5 9-6 11-2 4 0 6 5 3 7l-2 1z" />
              <path d="M15 10v10M10.500 15h9.500" stroke="#0f294d" strokeWidth="4.500" />
              <path d="M15 11v9M10.500 15.500h9.500" stroke="#fff" strokeWidth="2.600" />
            </svg>
          </div>
          <div className="ml-px flex h-[26px] w-[30px] items-center justify-center rounded-full bg-[#6d6d6d]">
            <svg width="20" height="20" viewBox="0 0 20 20" fill="#fff">
              <path d="M10 0l3 4.500H7zM10 20l3-4.500H7zM0 10l4.500-3v6zM20 10l-4.500-3v6z" />
              <circle cx="10" cy="10" r="1.800" />
            </svg>
          </div>
          <div className="ml-px flex h-[28px] w-8 items-center justify-center rounded-full border border-white">
            <svg width="20" height="18" viewBox="0 0 20 18" fill="#fff">
              <path d="M0 17l7-10 4 6 2-3 6 7z" />
              <circle cx="16" cy="4" r="2.800" />
            </svg>
          </div>
          <div className="mr-px ml-[2px] flex h-[29px] w-[95px] items-center rounded-[11px] border-2 border-white bg-[#007aae]">
            <div className="flex h-[27px] w-full items-center border border-[#00b4e8]">
              <svg width="20" height="22" viewBox="0 0 20 22" fill="none" stroke="#fff" className="ml-[2px] shrink-0">
                <circle cx="6.500" cy="14.500" r="5.800" fill="#fff" />
                <path d="M6.500 9v11M1 14.500h11M2 11.500h9M2 17.500h9M4 9.500q-2 5 0 10M9 9.500q2 5 0 10" stroke="#007aae" strokeWidth="0.700" />
                <path d="M13 3.500h7M11 8.500h7" strokeWidth="1.600" />
                <path d="M11 3.500l3-2.500v5zM20 8.500l-3-2.500v5z" fill="#fff" stroke="none" />
              </svg>
              <span className="ml-[2px] text-[15.800px]">00:09:30</span>
            </div>
          </div>
        </div>
      </div>

      {/* workspace */}
      <div className="flex h-[757px] shrink-0 border border-[#828790] bg-white">
        <Topology />
        <div className="flex w-[25px] justify-center bg-[#f0f0f0] pt-[80px]">
          <div className="h-[530px] w-[11px] bg-[#848484]" />
        </div>
      </div>

      {/* time bar */}
      <div className="flex h-[34px] shrink-0 items-center justify-between bg-[#0f294d] text-white">
        <div className="flex items-center pl-[17px]">
          <span className="w-[105px] text-[15.500px] whitespace-nowrap">Time: 00:00:18</span>
          <div className="flex h-[28px] w-8 items-center justify-center rounded-full border border-white">
            <svg width="20" height="22" viewBox="0 0 20 22" fill="none">
              <path d="M12 5a7.500 7.500 0 1 1-6 1" stroke="#fff" strokeWidth="2" />
              <path d="M5 4l6-4v8z" fill="#fff" />
              <circle cx="9.500" cy="12.500" r="1.300" fill="#fff" />
            </svg>
          </div>
          <div className="ml-px flex h-[28px] w-8 items-center justify-center rounded-full border border-white">
            <svg width="18" height="12" viewBox="0 0 18 12" fill="#fff">
              <path d="M0 0l9 6-9 6zM8 0l10 6-10 6z" />
            </svg>
          </div>
        </div>
        <div className="flex h-full items-center">
          <div className="flex h-[34px] w-[120px] items-center rounded-[13px] border-[1.500px] border-white bg-[#007aae] pl-[3px]">
            <svg width="20" height="20" viewBox="0 0 20 20" fill="none">
              <circle cx="10" cy="10" r="9.800" fill="#fff" />
              <path d="M10 5v6l3 2.500" stroke="#007aae" strokeWidth="1.300" />
            </svg>
            <span className="mt-px ml-[3px] text-[20.300px] font-bold">Realtime</span>
          </div>
          <div className="ml-[2px] flex h-[33px] w-[132px] items-center rounded-[13px] border-[1.500px] border-white pl-[3px]">
            <svg width="20" height="18" viewBox="0 0 20 18" fill="#fff">
              <path d="M3 12V8c0-7 14-7 14 0v4z" />
              <path d="M9 0h2v3H9zM0 13h3v-2h14v2h3v4H0z" />
              <path d="M5 8h10M3 17v-2.500M7 17v-2.500M11 17v-2.500M15 17v-2.500" stroke="#0f294d" strokeWidth="1.300" />
            </svg>
            <span className="ml-[2px] text-[21px]">Simulation</span>
          </div>
        </div>
      </div>

      {/* bottom panes */}
      <div className="flex h-[127px] shrink-0">
        <div className="flex w-[210px] shrink-0 flex-col pt-1">
          <div className="flex h-[118px] flex-col bg-white pt-3">
            <PaletteRow items={["network", "end", "board", "bolt", "folder", "cloudlines"]} />
            <div className="mt-[3px] mb-[3px] ml-[3px] h-[28px] w-[204px] rounded-[2px] border border-b-2 border-[#e4e4e4] border-b-[#848484]" />
            <PaletteRow items={["router", "switch", "hub", "wireless", "security", "cloud"]} />
          </div>
        </div>

        <div className="flex w-[648px] shrink-0 flex-col">
          <div className="flex h-[107px] flex-col justify-between border border-[#828790] bg-white">
            <div className="flex gap-[5px] pt-[2px] pl-[2px]">
              {models.map((m) => (
                <div key={m} className="flex h-[35px] w-[35px] shrink-0 flex-col items-center rounded-[5px] border border-[#bdbdbd] bg-[#e4e4e4] pt-[2px]">
                  <RouterArt w={30} h={20} />
                  <span
                    className={
                      m.length > 6
                        ? "mt-[2px] font-['DejaVu_Sans'] text-[7.500px] leading-[9px] tracking-[-0.500px] whitespace-nowrap"
                        : m.length > 4
                          ? "mt-[2px] font-['DejaVu_Sans'] text-[8px] leading-[9px] tracking-[-0.200px] whitespace-nowrap"
                          : "mt-[2px] font-['DejaVu_Sans'] text-[8px] leading-[9px]"
                    }
                  >
                    {m}
                  </span>
                </div>
              ))}
            </div>
            <div className="flex h-[25px] items-center bg-[#efefef] pl-[26px]">
              <div className="h-[11px] w-[153px] bg-[#848484]" />
            </div>
          </div>
          <div className="flex h-5 items-center justify-center border border-black bg-white pt-px text-[15.700px] leading-none">
            (Select a Device to Drag and Drop to the Workspace)
          </div>
        </div>

        <div className="mt-px ml-[4px] flex w-[14px] shrink-0 items-start border-t border-l-2 border-[#828282] bg-[#f4f4f4] pt-[56px] pl-px">
          <svg width="9" height="10" viewBox="0 0 9 10">
            <path d="M0 0l9 5-9 5z" fill="#666" />
          </svg>
        </div>

        <div className="ml-[5px] flex h-[118px] shrink-0 bg-white pt-px">
          <div className="flex w-[192px] shrink-0 flex-col pl-[2px] text-[15.800px]">
            <div className="mt-[7px] flex items-center pl-[12px]">
              <div className="flex h-[30px] w-[34px] items-center justify-center rounded-[9px] bg-[#0f294d]">
                <svg width="26" height="26" viewBox="0 0 26 26">
                  <circle cx="13" cy="13" r="11.500" fill="#fff" />
                  <path d="M13 8v2.200M13 12v6" stroke="#0f294d" strokeWidth="1.400" />
                </svg>
              </div>
              <div className="ml-[13px] flex h-[25px] w-[111px] items-center justify-between rounded-[2px] border border-b-2 border-[#e4e4e4] border-b-[#848484] pr-[7px] pl-[4px] text-[16px] whitespace-nowrap">
                Scenario 0
                <svg width="12" height="7" viewBox="0 0 12 7" fill="none" stroke="#666" strokeWidth="1.200">
                  <path d="M0.500 0.500L6 6l5.500-5.500" />
                </svg>
              </div>
            </div>
            <div className="mt-[8px] flex pl-[28px] text-white">
              <div className="flex h-[28px] w-[41px] items-center justify-center rounded-[8px] bg-[#0f294d]">New</div>
              <div className="ml-[30px] flex h-[28px] w-[56px] items-center justify-center rounded-[8px] bg-[#0f294d]">Delete</div>
            </div>
            <div className="mt-[8px] flex h-[28px] w-[183px] items-center justify-center rounded-[8px] bg-[#0f294d] whitespace-nowrap text-white">
              Toggle PDU List Window
            </div>
          </div>
          <PduTable />
        </div>
      </div>
    </div>
  );
}
